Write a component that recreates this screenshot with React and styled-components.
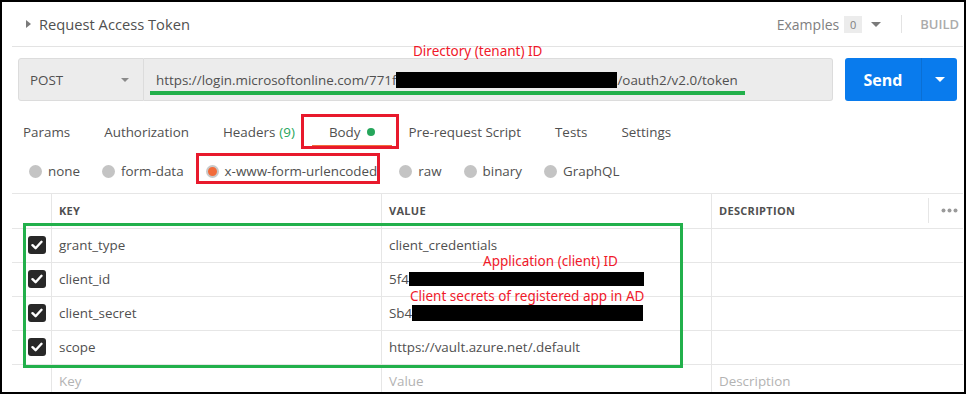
import React from 'react'
import styled, { createGlobalStyle } from 'styled-components'

const GlobalStyle = createGlobalStyle`
  body {
    margin: 0;
    background: #fff;
    font-family: "Open Sans", "Noto Sans", sans-serif;
    color: #505050;
  }
  * { box-sizing: border-box; }
`

const Frame = styled.div`
  position: relative;
  width: 966px;
  height: 394px;
  border: 2px solid #000;
  overflow: hidden;
  background: #fff;
`

const Header = styled.div`
  height: 45px;
  margin: 0 1px 0 10px;
  padding: 0 4px 0 14px;
  border-bottom: 1px solid #e3e3e3;
  display: flex;
  align-items: center;
`

const Title = styled.span`
  font-size: 14.7px;
  color: #505050;
  margin-left: 8px;
  flex: 1;
`

const Caret = styled.span`
  display: inline-block;
  width: 0;
  height: 0;
  border-left: ${p => p.size || 4}px solid transparent;
  border-right: ${p => p.size || 4}px solid transparent;
  border-top: ${p => p.size || 4}px solid ${p => p.color || '#808080'};
`

const RightCaret = styled.span`
  display: inline-block;
  width: 0;
  height: 0;
  border-top: 4px solid transparent;
  border-bottom: 4px solid transparent;
  border-left: 5px solid #7a7a7a;
`

const Examples = styled.span`
  font-size: 14px;
  color: #808080;
`

const Badge = styled.span`
  background: #ececec;
  color: #808080;
  font-size: 11px;
  width: 18px;
  height: 17px;
  display: inline-flex;
  align-items: center;
  justify-content: center;
  margin: 0 9px 0 5px;
`

const VDivider = styled.span`
  width: 1px;
  height: 18px;
  background: #e3e3e3;
  margin: 0 18px 0 20px;
`

const Build = styled.span`
  font-size: 13px;
  font-weight: 600;
  color: #ababab;
`

const UrlRow = styled.div`
  display: flex;
  height: 43px;
  margin-top: 11px;
  padding: 0 7px 0 16px;
`

const Method = styled.div`
  width: 126px;
  background: #ececec;
  border: 1px solid #dcdcdc;
  border-radius: 3px 0 0 3px;
  display: flex;
  align-items: center;
  justify-content: space-between;
  padding: 0 14px 0 11px;
  font-size: 13.4px;
  color: #505050;
`

const Url = styled.div`
  flex: 1;
  background: #ececec;
  border: 1px solid #dcdcdc;
  border-left: none;
  border-radius: 0 3px 3px 0;
  display: flex;
  align-items: center;
  padding-left: 12px;
  font-size: 13.4px;
  color: #505050;
  white-space: nowrap;
`

const Redact = styled.span`
  display: inline-block;
  background: #000;
  width: ${p => p.w}px;
  height: ${p => p.h || 15}px;
  vertical-align: middle;
`

const Send = styled.div`
  display: flex;
  width: 112px;
  margin-left: 12px;
  background: #097bed;
  border-radius: 3px;
  color: #fff;
`

const SendLabel = styled.div`
  width: 77px;
  display: flex;
  align-items: center;
  justify-content: center;
  font-size: 16px;
  font-weight: 700;
  border-right: 1px solid #0a6fd4;
`

const SendMenu = styled.div`
  flex: 1;
  display: flex;
  align-items: center;
  justify-content: center;
`

const Tabs = styled.div`
  display: flex;
  margin-top: 17px;
  padding-left: 4px;
  height: 29px;
`

const Tab = styled.div`
  padding: 0 17px;
  font-size: 13.4px;
  color: #505050;
  display: flex;
  align-items: center;
  border-bottom: 2px solid ${p => (p.active ? '#f26b3a' : 'transparent')};
  white-space: nowrap;
`

const Count = styled.span`
  color: #26a65b;
  margin-left: 4px;
`

const Dot = styled.span`
  width: 8px;
  height: 8px;
  border-radius: 50%;
  background: #26a65b;
  margin-left: 6px;
`

const Radios = styled.div`
  display: flex;
  align-items: center;
  height: 26px;
  margin-top: 11px;
  padding-left: 27px;
`

const Radio = styled.label`
  display: flex;
  align-items: center;
  font-size: 13.4px;
  color: #505050;
  margin-right: 22px;
`

const Circle = styled.span`
  width: 13px;
  height: 13px;
  border-radius: 50%;
  background: ${p => (p.checked ? '#f26b3a' : '#c4c4c4')};
  border: ${p => (p.checked ? '2px solid #c9c9c9' : 'none')};
  margin-right: 6px;
`

const Table = styled.div`
  display: grid;
  grid-template-columns: 39px 330px 330px 1fr;
  margin: 9px 1px 0 10px;
  border-top: 1px solid #e6e6e6;
`

const Cell = styled.div`
  height: 34px;
  border-bottom: 1px solid #e6e6e6;
  border-left: ${p => (p.first ? 'none' : '1px solid #e6e6e6')};
  display: flex;
  align-items: center;
  padding: 0 0 1px 7px;
  font-size: 13.4px;
  color: ${p => (p.placeholder ? '#b3b3b3' : '#505050')};
  white-space: nowrap;
`

const HeadCell = styled(Cell)`
  font-size: 11px;
  font-weight: 700;
  letter-spacing: 0.3px;
  color: #505050;
  height: 35px;
`

const CheckCell = styled(Cell)`
  justify-content: flex-end;
  padding: 0 5px 1px 0;
`

const Check = styled.span`
  width: 18px;
  height: 18px;
  border-radius: 3px;
  background: #282828;
  display: flex;
  align-items: center;
  justify-content: center;
`

const DescHead = styled.span`
  flex: 1;
`

const MoreWrap = styled.div`
  display: flex;
  align-items: center;
  height: 25px;
  border-left: 1px solid #e6e6e6;
  padding: 0 5px 0 12px;
`

const Note = styled.div`
  position: absolute;
  left: ${p => p.x}px;
  top: ${p => p.y}px;
  font-family: "Noto Sans", "Open Sans", sans-serif;
  font-size: 13.5px;
  line-height: 16px;
  color: #f0182a;
  white-space: nowrap;
`

const Box = styled.div`
  position: absolute;
  left: ${p => p.x}px;
  top: ${p => p.y}px;
  width: ${p => p.w}px;
  height: ${p => p.h}px;
  border: 3px solid ${p => p.color};
`

const Underline = styled.div`
  position: absolute;
  left: 148px;
  top: 89px;
  width: 595px;
  height: 4px;
  background: #22b04b;
`

const CheckMark = () => (
  <svg width="12" height="10" viewBox="0 0 12 10">
    <path d="M1.5 5.2 L4.6 8.2 L10.5 1.8" stroke="#fff" strokeWidth="2.4" fill="none" strokeLinecap="round" strokeLinejoin="round" />
  </svg>
)

const MoreDots = () => (
  <svg width="17" height="5" viewBox="0 0 17 5">
    <circle cx="2.5" cy="2.5" r="2" fill="#9a9a9a" />
    <circle cx="8.5" cy="2.5" r="2" fill="#9a9a9a" />
    <circle cx="14.5" cy="2.5" r="2" fill="#9a9a9a" />
  </svg>
)

const rows = [
  { key: 'grant_type', value: 'client_credentials' },
  { key: 'client_id', value: '5f4', redact: 235 },
  { key: 'client_secret', value: 'Sb4', redact: 231, h: 16 },
  { key: 'scope', value: 'https://vault.azure.net/.default' },
]

const tabs = ['Params', 'Authorization', 'Headers', 'Body', 'Pre-request Script', 'Tests', 'Settings']
const bodyTypes = ['none', 'form-data', 'x-www-form-urlencoded', 'raw', 'binary', 'GraphQL']

export default function App() {
  return (
    <>
      <GlobalStyle />
      <Frame>
        <Header>
          <RightCaret />
          <Title>Request Access Token</Title>
          <Examples>Examples</Examples>
          <Badge>0</Badge>
          <Caret size={5} color="#7a7a7a" />
          <VDivider />
          <Build>BUILD</Build>
        </Header>

        <UrlRow>
          <Method>
            POST
            <Caret size={4} color="#8a8a8a" />
          </Method>
          <Url>
            https://login.microsoftonline.com/771f
            <Redact w={221} h={16} />
            /oauth2/v2.0/token
          </Url>
          <Send>
            <SendLabel>Send</SendLabel>
            <SendMenu>
              <Caret size={5} color="#fff" />
            </SendMenu>
          </Send>
        </UrlRow>

        <Tabs>
          {tabs.map(t => (
            <Tab key={t} active={t === 'Body'}>
              {t}
              {t === 'Headers' && <Count>(9)</Count>}
              {t === 'Body' && <Dot />}
            </Tab>
          ))}
        </Tabs>

        <Radios>
          {bodyTypes.map(b => (
            <Radio key={b}>
              <Circle checked={b === 'x-www-form-urlencoded'} />
              {b}
            </Radio>
          ))}
        </Radios>

        <Table>
          <HeadCell first />
          <HeadCell>KEY</HeadCell>
          <HeadCell>VALUE</HeadCell>
          <HeadCell>
            <DescHead>DESCRIPTION</DescHead>
            <MoreWrap>
              <MoreDots />
            </MoreWrap>
          </HeadCell>
          {rows.map(r => (
            <React.Fragment key={r.key}>
              <CheckCell first>
                <Check>
                  <CheckMark />
                </Check>
              </CheckCell>
              <Cell>{r.key}</Cell>
              <Cell>
                {r.value}
                {r.redact && <Redact w={r.redact} h={r.h || 14} />}
              </Cell>
              <Cell />
            </React.Fragment>
          ))}
          <Cell first />
          <Cell placeholder>Key</Cell>
          <Cell placeholder>Value</Cell>
          <Cell placeholder>Description</Cell>
        </Table>

        <Underline />
        <Note x={411} y={41}>Directory (tenant) ID</Note>
        <Note x={481} y={251}>Application (client) ID</Note>
        <Note x={408} y={286}>Client secrets of registered app in AD</Note>
        <Box x={299} y={112} w={98} h={35} color="#e8192c" />
        <Box x={194} y={151} w={184} h={31} color="#e8192c" />
        <Box x={21} y={221} w={660} h={145} color="#22b04b" />
      </Frame>
    </>
  )
}
